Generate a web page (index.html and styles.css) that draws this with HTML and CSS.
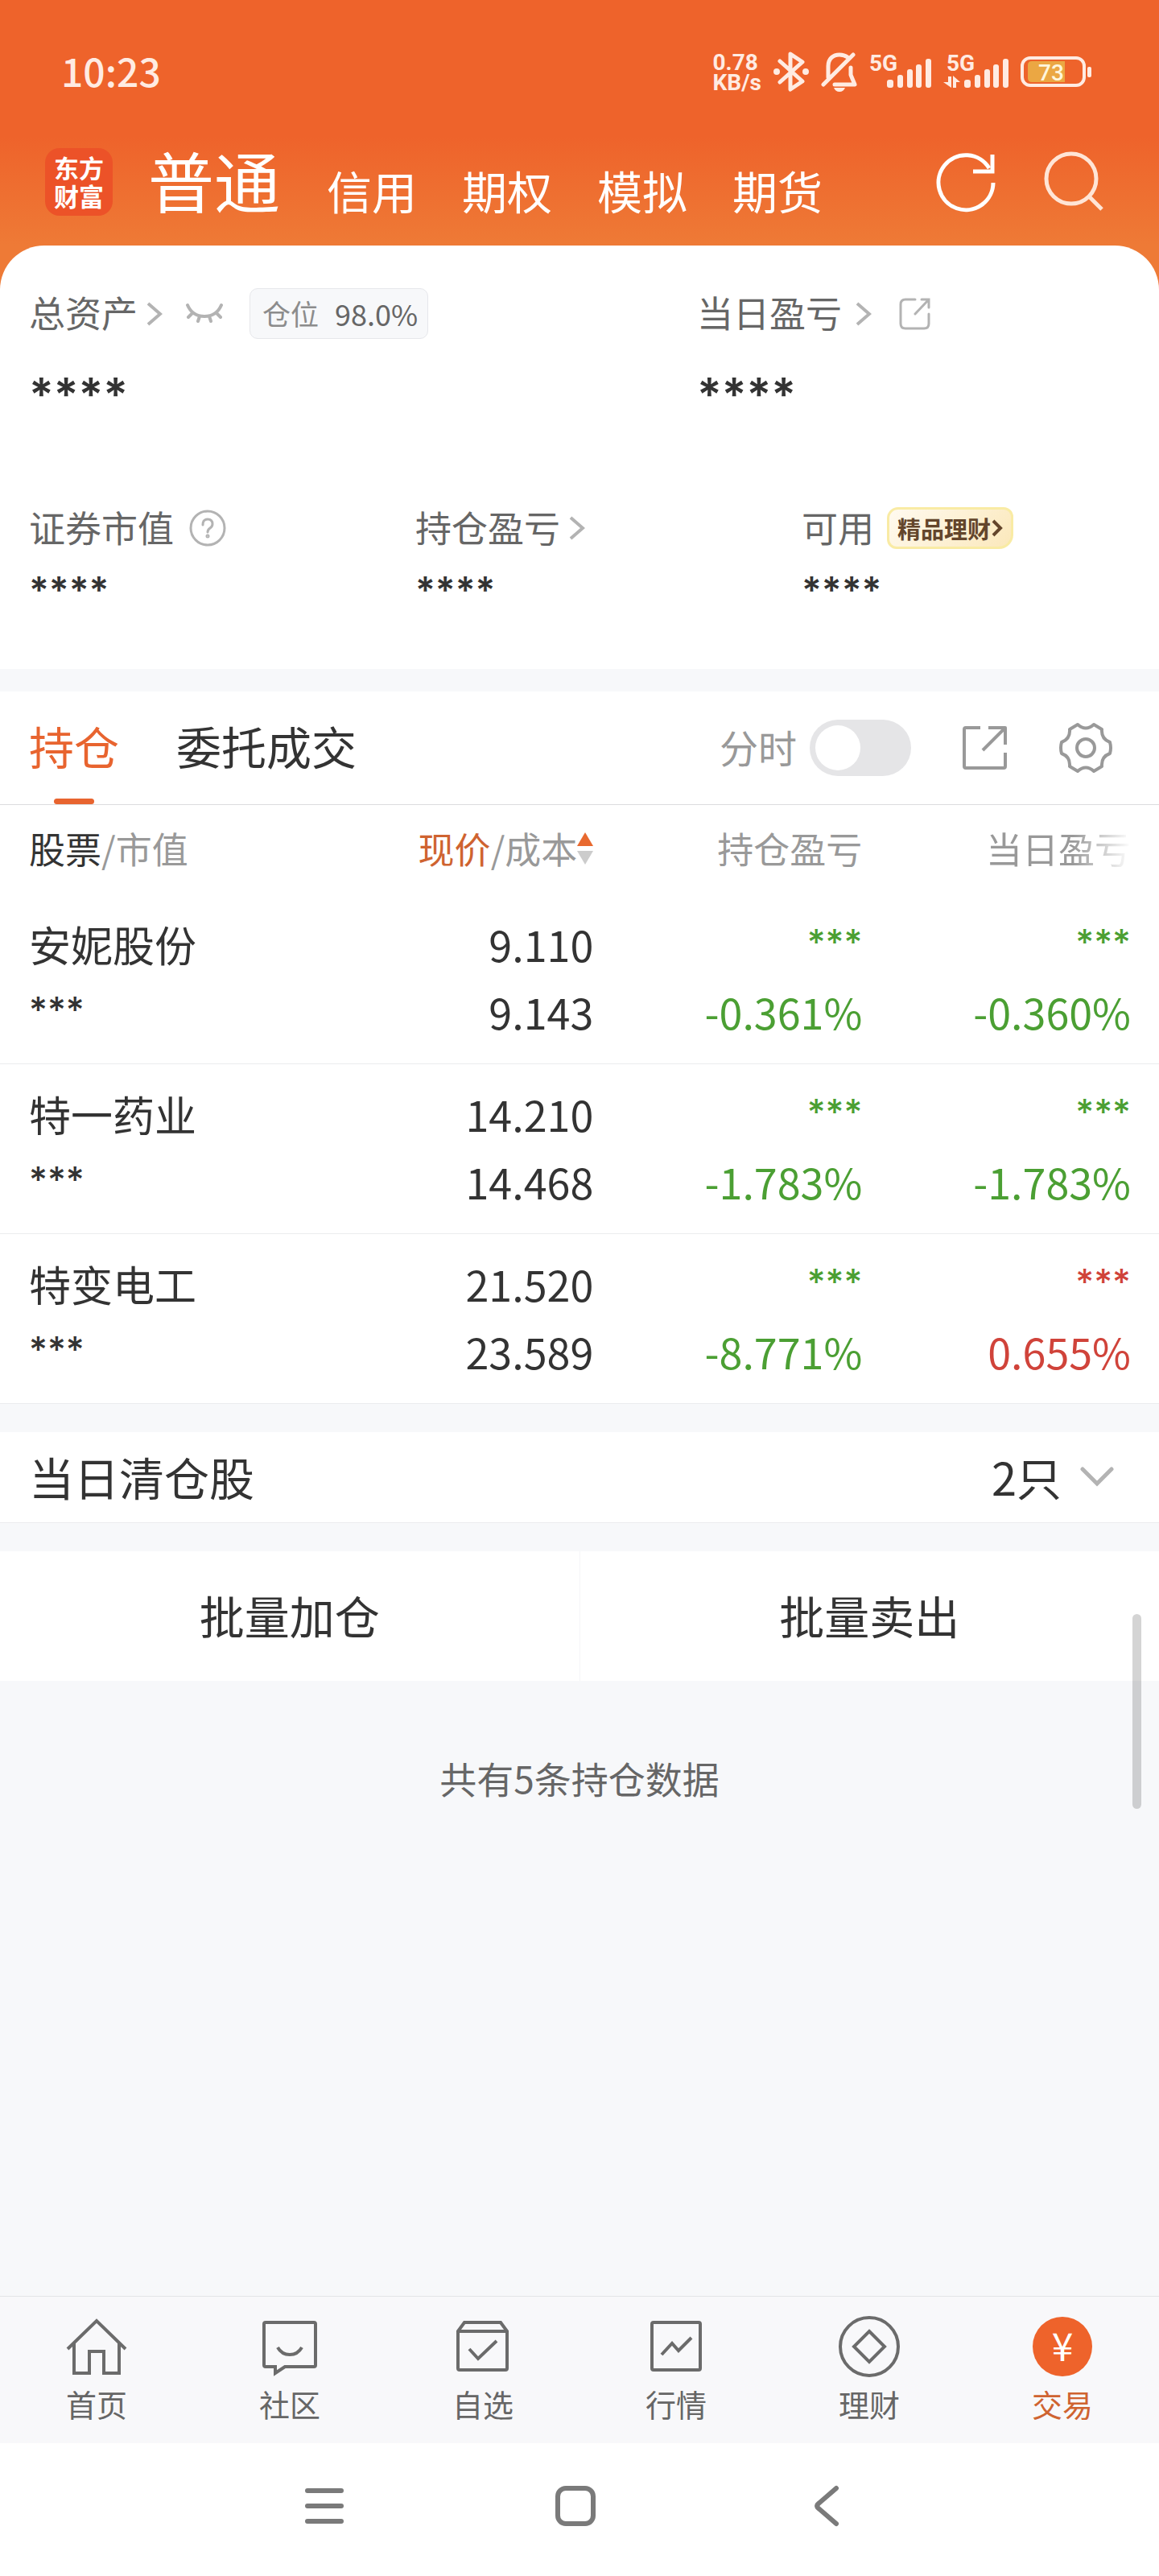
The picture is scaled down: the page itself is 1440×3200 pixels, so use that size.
FILE: index.html
```html
<!DOCTYPE html>
<html lang="zh-CN">
<head>
<meta charset="UTF-8">
<meta name="viewport" content="width=device-width, initial-scale=1.0">
<title>交易 - 持仓</title>
<link rel="stylesheet" href="styles.css">
</head>
<body>

<div class="top">
  <div class="status-bar">
    <span class="time">10:23</span>
    <div class="status-icons">
      <div class="speed"><span>0.78</span><span>KB/s</span></div>
      <svg class="bluetooth" width="46" height="50" viewBox="0 0 46 50" fill="none" stroke="currentColor" stroke-width="5" stroke-linejoin="round" stroke-linecap="round">
        <path d="M9 12L37 37L22 47V3L37 13L9 38"/>
        <circle cx="5" cy="25" r="2" stroke-width="4"/><circle cx="41" cy="25" r="2" stroke-width="4"/>
      </svg>
      <svg class="bell" width="46" height="50" viewBox="0 0 46 50" fill="none" stroke="currentColor" stroke-width="5" stroke-linecap="round" stroke-linejoin="round">
        <path d="M9 32V18C9 9 15 4 23 4Q29 4 33 7M37 20V29L42 41H17M3 41L40 4"/>
        <path d="M16 45H30Q28 50 23 50Q18 50 16 45Z" fill="currentColor" stroke="none"/>
      </svg>
      <svg class="signal" width="78" height="54" viewBox="0 -6 78 54" fill="currentColor">
        <text x="0" y="20" class="net">5G</text>
        <rect x="22" y="31" width="8" height="10" rx="3"/><rect x="35" y="25" width="7" height="16" rx="3"/><rect x="47" y="18" width="7" height="23" rx="3"/><rect x="58" y="12" width="7" height="29" rx="3"/><rect x="70" y="5" width="7" height="36" rx="3"/>
      </svg>
      <svg class="signal" width="82" height="54" viewBox="0 -6 82 54" fill="currentColor">
        <text x="4" y="20" class="net">5G</text>
        <path d="M6 27H10V41L0 34H6ZM12 41V26L21 34H16V41Z"/>
        <rect x="26" y="31" width="8" height="10" rx="3"/><rect x="39" y="25" width="7" height="16" rx="3"/><rect x="51" y="18" width="7" height="23" rx="3"/><rect x="62" y="12" width="7" height="29" rx="3"/><rect x="74" y="5" width="7" height="36" rx="3"/>
      </svg>
      <svg class="battery" width="90" height="40" viewBox="0 0 90 40">
        <rect x="2" y="3" width="77" height="34" rx="10" fill="none" stroke="currentColor" stroke-width="4"/>
        <path d="M14 7H55V33H14Q9 33 9 28V12Q9 7 14 7Z" fill="#eba743"/>
        <rect x="83" y="14" width="5" height="13" rx="2" fill="currentColor"/>
        <text x="22" y="31" class="level">73</text>
      </svg>
    </div>
  </div>

  <header class="app-bar">
    <div class="logo">东方<br>财富</div>
    <nav class="accounts">
      <a href="#" class="current">普通</a>
      <a href="#">信用</a>
      <a href="#">期权</a>
      <a href="#">模拟</a>
      <a href="#">期货</a>
    </nav>
    <div class="actions">
      <button type="button" aria-label="刷新">
        <svg width="80" height="80" viewBox="0 0 80 80" fill="none" stroke="#fff" stroke-width="5">
          <path d="M74 41A34 34 0 1 1 69 23"/>
          <path d="M73 6V27H49"/>
        </svg>
      </button>
      <button type="button" aria-label="搜索">
        <svg width="80" height="80" viewBox="0 0 80 80" fill="none" stroke="#ffe5d6" stroke-width="5">
          <circle cx="37" cy="36" r="31"/>
          <path d="M59 58L75 74"/>
        </svg>
      </button>
    </div>
  </header>

  <section class="summary">
    <div class="summary-main">
      <div class="item total">
        <div class="label">
          <span class="name">总资产</span>
          <svg class="arrow" width="20" height="30" viewBox="0 0 20 30"><path d="M2 2L17 15L2 28"/></svg>
          <button type="button" class="eye" aria-label="显示金额">
            <svg width="48" height="30" viewBox="0 0 48 30" fill="none" stroke="#b3b3b3" stroke-width="4" stroke-linecap="round"><path d="M3 4Q9 18 24 18T45 4M8 15L4 19M18 18L16 24M30 18L32 24M40 15L44 19"/></svg>
          </button>
          <span class="tag"><span>仓位</span><b>98.0%</b></span>
        </div>
        <div class="stars large">****</div>
      </div>
      <div class="item">
        <div class="label">
          <span class="name">当日盈亏</span>
          <svg class="arrow day" width="20" height="30" viewBox="0 0 20 30"><path d="M2 2L17 15L2 28"/></svg>
          <button type="button" class="share-small" aria-label="分享">
            <svg width="40" height="40" viewBox="0 0 40 40" fill="none" stroke="#b3b3b3" stroke-width="3" stroke-linecap="round"><path d="M20 2H8Q2 2 2 8V32Q2 38 8 38H31Q37 38 37 32V20M28 2H37V12M37 2L20 20"/></svg>
          </button>
        </div>
        <div class="stars large">****</div>
      </div>
    </div>

    <div class="summary-sub">
      <div class="item">
        <div class="label">
          <span class="name">证券市值</span>
          <svg class="help" width="48" height="48" viewBox="0 0 48 48" fill="none" stroke="#b3b3b3" stroke-width="3" stroke-linecap="round"><circle cx="24" cy="24" r="21"/><path d="M18 20Q18 13 24 13T30 19Q30 22 27 24T24 29"/><circle cx="24" cy="34" r="1"/></svg>
        </div>
        <div class="stars">****</div>
      </div>
      <div class="item">
        <div class="label">
          <span class="name">持仓盈亏</span>
          <svg class="arrow" width="20" height="30" viewBox="0 0 20 30"><path d="M2 2L17 15L2 28"/></svg>
        </div>
        <div class="stars">****</div>
      </div>
      <div class="item">
        <div class="label">
          <span class="name">可用</span>
          <a href="#" class="badge">精品理财<svg width="14" height="22" viewBox="0 0 14 22" fill="none" stroke="#63452b" stroke-width="4"><path d="M2 2L11 11L2 20"/></svg></a>
        </div>
        <div class="stars">****</div>
      </div>
    </div>
  </section>
</div>

<main>
  <div class="tabs">
    <a href="#" class="tab active">持仓</a>
    <a href="#" class="tab">委托成交</a>
    <div class="tools">
      <label for="minute">分时</label>
      <input type="checkbox" id="minute" class="switch">
      <button type="button" class="share" aria-label="分享">
        <svg width="56" height="56" viewBox="0 0 56 56" fill="none" stroke="#999" stroke-width="4" stroke-linejoin="round"><path d="M22 3H4Q2 3 2 5V51Q2 53 4 53H51Q53 53 53 51V34M32 3H53V24M53 3L25 31"/></svg>
      </button>
      <button type="button" class="setting" aria-label="设置">
        <svg width="68" height="68" viewBox="0 0 68 68" fill="none" stroke="#999" stroke-width="4" stroke-linejoin="round"><path d="M24 5Q34 14 44 5L54 11Q53 23 64 27Q66 34 64 41Q53 45 54 57L44 63Q34 54 24 63L14 57Q15 45 4 41Q2 34 4 27Q15 23 14 11Z"/><circle cx="34" cy="34" r="11"/></svg>
      </button>
    </div>
  </div>

  <table class="holdings">
    <thead>
      <tr>
        <th><b>股票</b>/市值</th>
        <th>
          <div class="sort"><span><em>现价</em>/成本</span><svg width="20" height="40" viewBox="0 0 20 40"><path d="M10 0L20 17H0Z" fill="#e8692f"/><path d="M0 23H20L10 40Z" fill="#ccc"/></svg></div>
        </th>
        <th>持仓盈亏</th>
        <th><span class="fade">当日盈亏</span></th>
      </tr>
    </thead>
    <tbody>
      <tr>
        <td>安妮股份<br><span class="mask">***</span></td>
        <td>9.110<br>9.143</td>
        <td class="down"><span class="mask">***</span><br>-0.361%</td>
        <td class="down"><span class="mask">***</span><br>-0.360%</td>
      </tr>
      <tr>
        <td>特一药业<br><span class="mask">***</span></td>
        <td>14.210<br>14.468</td>
        <td class="down"><span class="mask">***</span><br>-1.783%</td>
        <td class="down"><span class="mask">***</span><br>-1.783%</td>
      </tr>
      <tr>
        <td>特变电工<br><span class="mask">***</span></td>
        <td>21.520<br>23.589</td>
        <td class="down"><span class="mask">***</span><br>-8.771%</td>
        <td class="up"><span class="mask">***</span><br>0.655%</td>
      </tr>
    </tbody>
  </table>

  <button type="button" class="cleared">
    <span>当日清仓股</span>
    <span class="count">2只</span>
    <svg width="42" height="26" viewBox="0 0 42 26" fill="none" stroke="#b3b3b3" stroke-width="5" stroke-linecap="round"><path d="M3 3L21 21L39 3"/></svg>
  </button>

  <div class="batch">
    <button type="button">批量加仓</button>
    <button type="button">批量卖出</button>
  </div>

  <p class="total-count">共有5条持仓数据</p>
  <div class="scroll-thumb"></div>
</main>

<nav class="bottom-nav">
  <a href="#">
    <svg width="76" height="76" viewBox="0 0 76 76"><path d="M2 41L38 6L74 41M10 33V71H29V44H47V71H66V33"/></svg>
    首页
  </a>
  <a href="#">
    <svg width="76" height="76" viewBox="0 0 76 76"><path d="M8 8H68Q70 8 70 10V61Q70 63 68 63H32L20 71V63H8Q6 63 6 61V10Q6 8 8 8ZM23 39Q28 48 38 48T53 39"/></svg>
    社区
  </a>
  <a href="#">
    <svg width="76" height="76" viewBox="0 0 76 76"><path d="M7 19L15 8H60L68 19V65Q68 67 66 67H9Q7 67 7 65ZM7 19H68M21 41L32 53L55 31"/></svg>
    自选
  </a>
  <a href="#">
    <svg width="76" height="76" viewBox="0 0 76 76"><path d="M10 8H66Q68 8 68 10V65Q68 67 66 67H10Q8 67 8 65V10Q8 8 10 8ZM20 48L33 34L41 43L57 27"/></svg>
    行情
  </a>
  <a href="#">
    <svg width="76" height="76" viewBox="0 0 76 76"><circle cx="38" cy="38" r="36"/><path d="M38 19L57 38L38 57L19 38Z"/></svg>
    理财
  </a>
  <a href="#" class="active">
    <svg width="76" height="76" viewBox="0 0 76 76"><circle cx="38" cy="38" r="37" class="coin"/><text x="38" y="56" class="yuan">¥</text></svg>
    交易
  </a>
</nav>

<div class="system-nav">
  <button type="button" aria-label="最近任务">
    <svg width="52" height="52" viewBox="0 0 52 52"><path d="M5 7H47M5 26H47M5 45H47"/></svg>
  </button>
  <button type="button" aria-label="主屏幕">
    <svg width="52" height="52" viewBox="0 0 52 52"><rect x="4" y="4" width="44" height="44" rx="10"/></svg>
  </button>
  <button type="button" aria-label="返回">
    <svg width="52" height="52" viewBox="0 0 52 52"><path d="M38 4L16 23Q12 26 16 29L38 48"/></svg>
  </button>
</div>

</body>
</html>
```
FILE: styles.css
```css
* { box-sizing: border-box; }
body {
  margin: 0;
  min-height: 100vh;
  display: flex;
  flex-direction: column;
  font-family: "Noto Sans CJK SC", sans-serif;
  background: #f7f8fa;
  color: #333;
}
a { color: inherit; text-decoration: none; }
button {
  padding: 0;
  border: none;
  background: none;
  color: inherit;
  font: inherit;
  cursor: pointer;
}
svg { display: block; flex: none; }

/* status bar + header */
.top {
  background: linear-gradient(#ee632b 170px, #ee7a36 305px);
}
.status-bar {
  display: flex;
  justify-content: space-between;
  align-items: center;
  height: 172px;
  padding: 6px 82px 0 76px;
  color: #ffebe2;
}
.time {
  padding-bottom: 4px;
  font-size: 48px;
  font-weight: 500;
}
.status-icons {
  display: flex;
  align-items: center;
  gap: 14px;
}
.speed {
  display: flex;
  flex-direction: column;
  padding-top: 2px;
  font-family: Roboto, sans-serif;
  font-size: 28px;
  line-height: 25px;
  font-weight: 700;
}
.net, .level {
  font-family: Roboto, sans-serif;
  font-size: 28px;
  font-weight: 700;
}
.level {
  font-weight: 500;
  fill: #fff6dc;
}

.app-bar {
  display: flex;
  align-items: center;
  height: 108px;
  margin-bottom: 25px;
  padding: 0 66px 0 56px;
  color: #fff;
}
.logo {
  width: 84px;
  height: 84px;
  padding: 6px 0;
  border-radius: 18px;
  background: #ec5228;
  font-size: 31px;
  line-height: 35px;
  font-weight: 700;
  text-align: center;
}
.accounts {
  display: flex;
  align-items: flex-end;
  gap: 56px;
  margin-left: 44px;
  padding-bottom: 6px;
  font-size: 56px;
  line-height: 1;
}
.accounts .current {
  margin-right: 2px;
  font-size: 82px;
}
.actions {
  display: flex;
  gap: 54px;
  margin-left: auto;
}

/* assets */
.summary {
  padding: 53px 0 70px;
  border-radius: 55px 55px 0 0;
  background: #fff;
}
.summary-main {
  display: grid;
  grid-template-columns: 830fr 610fr;
}
.summary-sub {
  display: grid;
  grid-template-columns: repeat(3, 1fr);
  margin-top: 106px;
}
.summary .item { padding-left: 36px; }
.label {
  display: flex;
  align-items: center;
  height: 60px;
  font-size: 45px;
  color: #666;
}
.label .name { padding-bottom: 4px; }
.summary-main .label { height: 63px; }
.arrow {
  margin-left: 11px;
  fill: none;
  stroke: #b3b3b3;
  stroke-width: 4;
}
.arrow.day { margin-left: 17px; }
.eye { margin-left: 28px; }
.share-small { margin-left: 34px; }
.help { margin-left: 18px; }
.tag {
  display: flex;
  align-items: center;
  gap: 20px;
  height: 63px;
  margin-left: 32px;
  padding: 0 12px 2px 15px;
  border: 1px solid #e6e7eb;
  border-radius: 10px;
  background: #f7f8fa;
  font-size: 35px;
  color: #8c8c8c;
}
.tag b {
  font-size: 36px;
  font-weight: 400;
  color: #666;
}
.badge {
  display: flex;
  align-items: center;
  gap: 1px;
  height: 52px;
  margin-left: 16px;
  padding: 0 10px;
  border: 3px solid #f9eba4;
  border-radius: 14px 12px 18px 12px;
  background: linear-gradient(135deg, #fffaf0, #fbe8bb);
  font-size: 29px;
  font-weight: 700;
  color: #63452b;
}
.stars {
  margin-top: 22px;
  padding-bottom: 3px;
  font-family: Inter, sans-serif;
  font-size: 46px;
  line-height: 50px;
  font-weight: 600;
}
.stars.large {
  margin-top: 39px;
  padding: 0;
  font-size: 57px;
  line-height: 60px;
}

/* holdings */
main {
  position: relative;
  flex: 1;
  padding-top: 28px;
}
.tabs {
  display: flex;
  height: 141px;
  padding: 0 57px 0 36px;
  border-bottom: 1px solid #dcdcde;
  background: #fff;
  line-height: 134px;
}
.tab {
  position: relative;
  margin-right: 71px;
  font-size: 56px;
}
.tab.active { color: #e8642f; }
.tab.active::after {
  content: "";
  position: absolute;
  left: 50%;
  bottom: 0;
  width: 50px;
  height: 7px;
  margin-left: -25px;
  border-radius: 4px;
  background: #e8642f;
}
.tools {
  display: flex;
  align-items: center;
  margin-left: auto;
  font-size: 48px;
  color: #999;
}
.tools label { padding-bottom: 4px; }
.switch {
  appearance: none;
  width: 126px;
  height: 70px;
  margin: 0 0 0 16px;
  padding: 7px;
  border-radius: 35px;
  background: #e5e5e7;
}
.switch::before {
  content: "";
  display: block;
  width: 56px;
  height: 56px;
  border-radius: 50%;
  background: #fff;
}
.switch:checked { background: #e8642f; }
.switch:checked::before { margin-left: auto; }
.share { margin-left: 64px; }
.setting { margin-left: 63px; }

.holdings {
  width: 100%;
  table-layout: fixed;
  border-collapse: collapse;
  background: #fff;
}
.holdings th {
  width: 23.2%;
  height: 111px;
  padding: 0 0 4px;
  font-size: 45px;
  line-height: 60px;
  font-weight: 400;
  text-align: right;
  color: #999;
}
.holdings th b {
  font-weight: 400;
  color: #333;
}
.holdings th em {
  font-style: normal;
  color: #cf6330;
}
.holdings th:first-child { width: 28%; }
.holdings th:last-child { width: 25.6%; }
.holdings th:first-child, .holdings td:first-child {
  padding-left: 36px;
  text-align: left;
}
.holdings th:last-child, .holdings td:last-child { padding-right: 35px; }
.sort {
  display: flex;
  justify-content: flex-end;
  align-items: center;
}
.fade {
  -webkit-mask-image: linear-gradient(to right, #000 60%, transparent);
  mask-image: linear-gradient(to right, #000 60%, transparent);
}
.holdings td {
  padding: 20px 0 22px;
  border-bottom: 1px solid #ebecee;
  font-size: 52px;
  line-height: 84px;
  text-align: right;
}
.mask {
  font-family: Inter, sans-serif;
  font-size: 44px;
  line-height: 40px;
  font-weight: 500;
  vertical-align: 9px;
}
.down { color: #4b9f33; }
.up { color: #d0433a; }

.cleared {
  display: flex;
  align-items: center;
  width: 100%;
  height: 113px;
  margin: 35px 0;
  padding: 0 56px 0 36px;
  border-bottom: 1px solid #ebecee;
  background: #fff;
  font-size: 56px;
}
.cleared span { padding-bottom: 4px; }
.cleared .count { margin: 0 23px 0 auto; }

.batch {
  display: flex;
  background: #fff;
}
.batch button {
  flex: 1;
  height: 161px;
  padding-bottom: 4px;
  font-size: 56px;
}
.batch button + button { border-left: 1px solid #f5f5f7; }

.total-count {
  margin: 90px 0 0;
  font-size: 46px;
  line-height: 60px;
  text-align: center;
  color: #666;
}
.scroll-thumb {
  position: absolute;
  top: 1174px;
  right: 22px;
  width: 11px;
  height: 242px;
  border-radius: 6px;
  background: rgba(0, 0, 0, 0.17);
}

/* bottom */
.bottom-nav {
  display: flex;
  padding: 24px 0;
  border-top: 1px solid #e3e4e6;
  background: #f8f8fa;
}
.bottom-nav a {
  flex: 1;
  display: flex;
  flex-direction: column;
  align-items: center;
  gap: 8px;
  font-size: 38px;
  line-height: 50px;
  color: #666;
}
.bottom-nav svg {
  fill: none;
  stroke: #6b6b6b;
  stroke-width: 4;
}
.bottom-nav .active { color: #cf6330; }
.bottom-nav .coin {
  fill: #ee632b;
  stroke: none;
}
.bottom-nav .yuan {
  fill: #fff;
  stroke: none;
  font-size: 48px;
  text-anchor: middle;
}
.system-nav {
  display: flex;
  justify-content: center;
  gap: 260px;
  padding: 52px 10px 61px 0;
  background: #fff;
}
.system-nav svg {
  fill: none;
  stroke: #7a7a7a;
  stroke-width: 6;
  stroke-linecap: round;
}
```
